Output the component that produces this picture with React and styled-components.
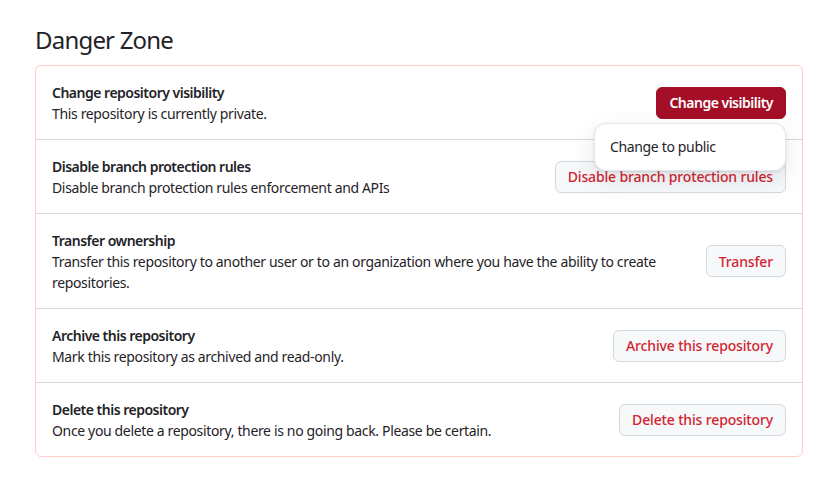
import React from "react";
import styled, { createGlobalStyle } from "styled-components";

const GlobalStyle = createGlobalStyle`
  html, body {
    margin: 0;
    padding: 0;
    background: #ffffff;
  }
  body {
    font-family: "Noto Sans", "Liberation Sans", sans-serif;
    color: #1f2328;
    font-size: 14px;
    letter-spacing: -0.35px;
  }
`;

const Page = styled.div`
  padding: 25px 23px 0 35px;
  width: 768px;
`;

const Heading = styled.h2`
  margin: 0 0 10px;
  font-size: 24px;
  line-height: 30px;
  font-weight: 400;
  letter-spacing: -0.8px;
  color: #1f2328;
`;

const Box = styled.div`
  border: 1px solid #ffcecb;
  border-radius: 6px;
  background: #ffffff;
`;

const Row = styled.div`
  display: flex;
  align-items: center;
  gap: 16px;
  padding: 17px 16px 15px;
  position: relative;
  & + & {
    border-top: 1px solid #d1d9e0;
  }
`;

const Info = styled.div`
  flex: 1;
  min-width: 0;
`;

const Title = styled.div`
  font-weight: 600;
  line-height: 20px;
  letter-spacing: -0.5px;
`;

const Desc = styled.div`
  line-height: 21px;
`;

const ActionWrap = styled.div`
  position: relative;
  flex-shrink: 0;
  margin-top: -2px;
`;

const Button = styled.button`
  height: 32px;
  padding: 0 12px;
  border-radius: 6px;
  font-family: inherit;
  font-size: 14px;
  font-weight: ${(p) => (p.$primary ? 600 : 500)};
  letter-spacing: ${(p) => (p.$primary ? "-0.5px" : "-0.15px")};
  white-space: nowrap;
  cursor: pointer;
  border: 1px solid ${(p) => (p.$primary ? "#a40e26" : "#d1d9e0")};
  background: ${(p) => (p.$primary ? "#a40e26" : "#f6f8fa")};
  color: ${(p) => (p.$primary ? "#ffffff" : "#d1242f")};
`;

const Menu = styled.div`
  position: absolute;
  top: 36px;
  right: 0;
  width: 192px;
  padding: 8px 0;
  background: #ffffff;
  border: 1px solid #e4e8ec;
  border-radius: 12px;
  box-shadow: 0 8px 24px rgba(66, 74, 83, 0.12), 0 1px 3px rgba(31, 35, 40, 0.12);
  z-index: 5;
  box-sizing: border-box;
`;

const MenuItem = styled.div`
  height: 30px;
  display: flex;
  align-items: center;
  padding: 0 15px;
  color: #1f2328;
  white-space: nowrap;
`;

const rows = [
  {
    title: "Change repository visibility",
    desc: "This repository is currently private.",
    action: "Change visibility",
    primary: true,
    menu: true,
  },
  {
    title: "Disable branch protection rules",
    desc: "Disable branch protection rules enforcement and APIs",
    action: "Disable branch protection rules",
  },
  {
    title: "Transfer ownership",
    desc: "Transfer this repository to another user or to an organization where you have the ability to create repositories.",
    action: "Transfer",
  },
  {
    title: "Archive this repository",
    desc: "Mark this repository as archived and read-only.",
    action: "Archive this repository",
  },
  {
    title: "Delete this repository",
    desc: "Once you delete a repository, there is no going back. Please be certain.",
    action: "Delete this repository",
  },
];

export default function App() {
  return (
    <>
      <GlobalStyle />
      <Page>
        <Heading>Danger Zone</Heading>
        <Box>
          {rows.map((r) => (
            <Row key={r.title}>
              <Info>
                <Title>{r.title}</Title>
                <Desc>{r.desc}</Desc>
              </Info>
              <ActionWrap>
                <Button $primary={r.primary}>{r.action}</Button>
                {r.menu && (
                  <Menu>
                    <MenuItem>Change to public</MenuItem>
                  </Menu>
                )}
              </ActionWrap>
            </Row>
          ))}
        </Box>
      </Page>
    </>
  );
}
